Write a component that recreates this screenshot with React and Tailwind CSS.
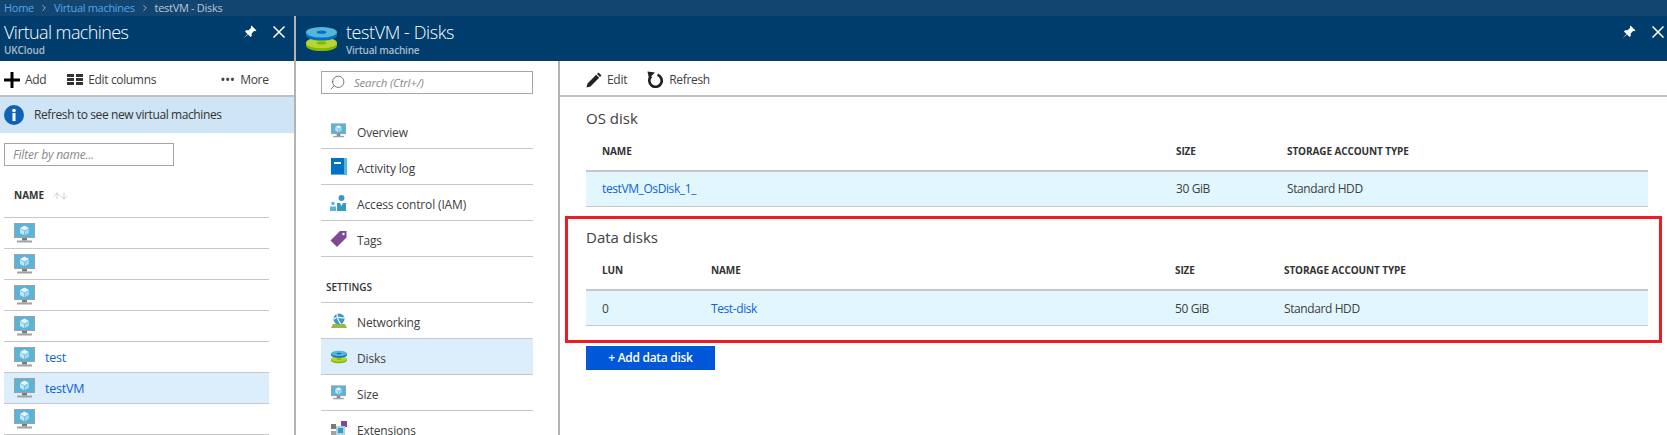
import { Search, ArrowUp, ArrowDown, ChevronRight } from "lucide-react";

const FONT = "font-['Open_Sans','Noto_Sans',sans-serif]";

function VmIcon({ className = "w-[21px] h-[20px]" }) {
  return (
    <svg viewBox="0 0 21 20" className={className}>
      <rect x="0" y="0" width="21" height="15" fill="#a0a1a2" />
      <rect x="1" y="1" width="19" height="13" fill="#59b4d9" />
      <path d="M10.5 2.5 15 5l-4.5 2.5L6 5z" fill="#e8f4fa" />
      <path d="M6 5.5l4.2 2.4v4.4L6 10z" fill="#c2e3f1" />
      <path d="M15 5.5l-4.2 2.4v4.4L15 10z" fill="#a5d5ea" />
      <rect x="8" y="15" width="5" height="2.5" fill="#7a7a7a" />
      <rect x="3" y="17.5" width="15" height="2" fill="#a0a1a2" />
    </svg>
  );
}

function DiskIcon({ className }) {
  return (
    <svg viewBox="0 0 32 26" className={className}>
      <path d="M0 17v3c0 3 7 5.500 16 5.500S32 23 32 20v-3z" fill="#7fba00" />
      <ellipse cx="16" cy="17" rx="16" ry="5.500" fill="#b8d432" />
      <ellipse cx="16" cy="17" rx="5" ry="1.700" fill="#7fba00" />
      <path d="M0 6v3c0 3 7 5.500 16 5.500S32 12 32 9V6z" fill="#0072c6" />
      <ellipse cx="16" cy="6" rx="16" ry="5.500" fill="#59b4d9" />
      <ellipse cx="16" cy="6" rx="5" ry="1.700" fill="#0072c6" />
    </svg>
  );
}

function PinIcon() {
  return (
    <svg viewBox="0 0 14 14" className="h-[14px] w-[14px]" fill="white">
      <path d="M8.500 0.500 13.500 5.500 12.300 6.200 11.300 5.800 8.700 8.400 8.700 11 7.600 12 2 6.400 3 5.300 5.600 5.300 8.200 2.700 7.800 1.700z" />
      <path d="M4.500 9 0.500 13.500 5 9.500z" />
    </svg>
  );
}

function CloseIcon() {
  return (
    <svg viewBox="0 0 12 12" className="h-[12px] w-[12px]" stroke="white" strokeWidth="1.500">
      <path d="M0.500 0.500 11.500 11.500M11.500 0.500 0.500 11.500" />
    </svg>
  );
}

function PanelHeaderActions() {
  return (
    <div className="mb-[14px] flex items-center gap-[16px]">
      <PinIcon />
      <CloseIcon />
    </div>
  );
}

function ActivityIcon() {
  return (
    <svg viewBox="0 0 16 17" className="h-[17px] w-[16px]">
      <rect width="16" height="17" fill="#59b4d9" />
      <rect width="13" height="16" fill="#0072c6" />
      <rect x="3" y="4" width="7" height="2" fill="white" />
    </svg>
  );
}

function AccessIcon() {
  return (
    <svg viewBox="0 0 17 16" className="h-[16px] w-[17px]">
      <circle cx="11.500" cy="3" r="3" fill="#3999c6" />
      <path d="M7 8h9v8H7z" fill="#3999c6" />
      <path d="M10 8l1.500 3L13 8z" fill="white" />
      <circle cx="3" cy="8.500" r="1.700" fill="#59b4d9" />
      <path d="M0 11.500h6V16H0z" fill="#59b4d9" />
    </svg>
  );
}

function TagIcon() {
  return (
    <svg viewBox="0 0 17 17" className="h-[17px] w-[17px]">
      <path d="M10 1h6.500v6.500L7 17 0.500 10.500z" fill="#804998" />
      <circle cx="13.500" cy="4" r="1.200" fill="white" />
    </svg>
  );
}

function NetworkIcon() {
  return (
    <svg viewBox="0 0 16 15" className="h-[15px] w-[16px]">
      <path d="M2 11h12l2 4H0z" fill="#9cb54a" />
      <circle cx="8" cy="6" r="5.500" fill="#3999c6" />
      <path d="M3 6c3-3 6-1 10-1M6 1c0 4 1 7 4 10" stroke="white" strokeWidth="1.200" fill="none" />
    </svg>
  );
}

function ExtensionsIcon() {
  return (
    <svg viewBox="0 0 16 16" className="h-[16px] w-[16px]">
      <rect x="0" y="3" width="5" height="5" fill="#7a7a7a" />
      <rect x="0" y="10" width="5" height="6" fill="#a0a1a2" />
      <rect x="10" y="0" width="6" height="6" fill="#804998" />
      <rect x="5" y="5" width="9" height="9" fill="#a5d5ea" />
      <rect x="7" y="7" width="5" height="5" fill="#3999c6" />
    </svg>
  );
}

function RefreshIcon() {
  return (
    <svg viewBox="0 0 16 17" className="mr-[6px] h-[17px] w-[16px]" fill="none">
      <path d="M10.500 3.800a6.200 6.200 0 1 1-6.300 1.400" stroke="#222" strokeWidth="2.700" />
      <path d="M0.500 0.500 8 1.500 2 7.500z" fill="#222" />
    </svg>
  );
}

const vmRows = ["", "", "", "", "test", "testVM", ""];

const menuTop = [
  { label: "Overview", icon: <VmIcon className="h-[15px] w-[15px]" /> },
  { label: "Activity log", icon: <ActivityIcon /> },
  { label: "Access control (IAM)", icon: <AccessIcon /> },
  { label: "Tags", icon: <TagIcon /> },
];

const menuSettings = [
  { label: "Networking", icon: <NetworkIcon /> },
  { label: "Disks", icon: <DiskIcon className="h-[14px] w-[16px]" />, active: true },
  { label: "Size", icon: <VmIcon className="h-[15px] w-[15px]" /> },
  { label: "Extensions", icon: <ExtensionsIcon /> },
];

function MenuRow({ item }) {
  return (
    <div
      className={`flex h-[36px] items-center gap-[10px] border-b border-[#c8c8c8] pl-[9px] text-[12px] tracking-[-0.15px] text-[#404040] ${
        item.active ? "bg-[#dcedfc]" : ""
      }`}
    >
      <span className="flex w-[17px] justify-center">{item.icon}</span>
      <span className="pt-[4px]">{item.label}</span>
    </div>
  );
}

function TableHead({ cols }) {
  return (
    <div className="flex h-[43px] items-center border-b-2 border-[#c8c8c8] pt-[3px] text-[10px] font-bold tracking-[-0.1px] text-[#333]">
      {cols.map((c) => (
        <div key={c.label} className={`${c.w} pl-[16px]`}>
          {c.label}
        </div>
      ))}
    </div>
  );
}

export default function App() {
  return (
    <div className={`flex h-[435px] w-[1667px] flex-col overflow-hidden bg-white ${FONT}`}>
      {/* Breadcrumb */}
      <div className="flex h-[16px] items-center gap-[5px] bg-[#134571] pl-[4px] text-[11px] tracking-[-0.3px] text-[#b8c8d6]">
        <span className="text-[#4fa6ea]">Home</span>
        <ChevronRight className="h-[10px] w-[10px]" />
        <span className="text-[#4fa6ea]">Virtual machines</span>
        <ChevronRight className="h-[10px] w-[10px]" />
        <span>testVM - Disks</span>
      </div>

      <div className="flex min-h-0 flex-1">
        {/* Virtual machines blade */}
        <div className="flex w-[296px] flex-col border-r-2 border-[#b3b3b3]">
          <div className="flex h-[45px] items-center justify-between bg-[#003c6c] pl-[4px] pr-[9px]">
            <div>
              <div className="text-[18px] font-light leading-[24px] tracking-[-0.6px] text-white">Virtual machines</div>
              <div className="text-[10px] font-semibold leading-[13px] tracking-[-0.1px] text-[#a9bccd]">UKCloud</div>
            </div>
            <PanelHeaderActions />
          </div>

          <div className="flex h-[36px] items-center border-b-2 border-[#c0c0c0] pl-[4px] pt-[3px] text-[12px] tracking-[-0.35px] text-[#404040]">
            <svg viewBox="0 0 16 16" className="mr-[5px] h-[16px] w-[16px] fill-black">
              <path d="M6.500 0h3v6.500H16v3H9.500V16h-3V9.500H0v-3h6.500z" />
            </svg>
            <span className="mr-[21px]">Add</span>
            <svg viewBox="0 0 16 11" className="mr-[5px] h-[11px] w-[16px] fill-[#333]">
              <path d="M0 0h7v3H0zM9 0h7v3H9zM0 4h7v3H0zM9 4h7v3H9zM0 8h7v3H0zM9 8h7v3H9z" />
            </svg>
            <span>Edit columns</span>
            <span className="ml-[65px] mr-[5px] text-[10px] font-bold tracking-[1px]">•••</span>
            <span>More</span>
          </div>

          <div className="flex h-[36px] items-center gap-[10px] bg-[#cfe4f5] pl-[4px] text-[12px] tracking-[-0.4px] text-[#333]">
            <svg viewBox="0 0 20 20" className="h-[20px] w-[20px]">
              <circle cx="10" cy="10" r="10" fill="#0f62b5" />
              <rect x="8.500" y="8" width="3" height="8" fill="white" />
              <circle cx="10" cy="5.500" r="1.800" fill="white" />
            </svg>
            Refresh to see new virtual machines
          </div>

          <div className="px-[4px] pt-[10px]">
            <div className="flex h-[23px] w-[170px] items-center border border-[#a6a6a6] pl-[8px] text-[12px] italic tracking-[-0.2px] text-[#8a8a8a]">
              Filter by name...
            </div>
            <div className="flex h-[52px] w-[265px] items-center border-b border-[#c8c8c8] pl-[10px] pt-[8px] text-[10px] font-bold text-[#333]">
              NAME
              <span className="ml-[8px] flex text-[#c8c8c8]">
                <ArrowUp className="h-[10px] w-[10px]" />
                <ArrowDown className="-ml-[3px] h-[10px] w-[10px]" />
              </span>
            </div>
            <div className="w-[265px]">
              {vmRows.map((name, i) => (
                <div
                  key={i}
                  className={`flex h-[31px] items-center gap-[10px] border-b border-[#c8c8c8] pl-[10px] text-[12.500px] tracking-[-0.2px] text-[#0f62d9] ${
                    name === "testVM" ? "bg-[#dcedfc]" : ""
                  }`}
                >
                  <VmIcon />
                  <span className="pt-[2px]">{name}</span>
                </div>
              ))}
            </div>
          </div>
        </div>

        {/* testVM - Disks blade */}
        <div className="flex min-w-0 flex-1 flex-col">
          <div className="flex h-[45px] items-center justify-between bg-[#003c6c] pl-[10px] pr-[3px]">
            <div className="flex items-center gap-[9px]">
              <DiskIcon className="h-[26px] w-[31px]" />
              <div>
                <div className="text-[18px] font-light leading-[24px] tracking-[-0.4px] text-white">testVM - Disks</div>
                <div className="text-[10px] font-semibold leading-[13px] tracking-[-0.2px] text-[#a9bccd]">Virtual machine</div>
              </div>
            </div>
            <PanelHeaderActions />
          </div>

          <div className="flex min-h-0 flex-1">
            {/* Resource menu */}
            <div className="w-[264px] border-r-2 border-[#b3b3b3] px-[25px] pt-[10px]">
              <div className="flex h-[23px] items-center gap-[8px] border border-[#a6a6a6] pl-[7px] text-[11.500px] italic tracking-[-0.2px] text-[#8a8a8a]">
                <Search className="h-[17px] w-[17px] -scale-x-100 text-[#555]" strokeWidth={1.1} />
                Search (Ctrl+/)
              </div>
              <div className="mt-[19px]">
                {menuTop.map((item) => (
                  <MenuRow key={item.label} item={item} />
                ))}
              </div>
              <div className="flex h-[46px] items-end border-b border-[#c8c8c8] pb-[7px] pl-[5px] text-[10px] font-semibold text-[#333]">
                SETTINGS
              </div>
              {menuSettings.map((item) => (
                <MenuRow key={item.label} item={item} />
              ))}
            </div>

            {/* Content */}
            <div className="min-w-0 flex-1">
              <div className="flex h-[36px] items-center border-b-2 border-[#c0c0c0] pl-[26px] pt-[3px] text-[12px] tracking-[-0.3px] text-[#404040]">
                <svg viewBox="0 0 16 16" className="mr-[5px] h-[16px] w-[16px] fill-[#222]">
                  <path d="M12.500 0.500 15.500 3.500 14 5 11 2zM10.200 2.800 13.200 5.800 4.500 14.500 0.500 15.500 1.500 11.500z" />
                </svg>
                <span className="mr-[20px]">Edit</span>
                <RefreshIcon />
                <span>Refresh</span>
              </div>

              <div className="ml-[26px] mr-[19px]">
                <div className="pt-[10px] text-[15px] leading-[22px] text-[#404040]">OS disk</div>
                <TableHead cols={[{ label: "NAME", w: "w-[574px]" }, { label: "SIZE", w: "w-[111px]" }, { label: "STORAGE ACCOUNT TYPE", w: "" }]} />
                <div className="flex h-[35px] items-center border-b border-[#c8c8c8] bg-[#e2f6fd] text-[12px] tracking-[-0.4px] text-[#404040]">
                  <div className="w-[574px] pl-[16px] text-[#0f62d9]">testVM_OsDisk_1_</div>
                  <div className="w-[111px] pl-[16px]">30 GiB</div>
                  <div className="pl-[16px]">Standard HDD</div>
                </div>
              </div>

              {/* Highlighted data disks section */}
              <div className="ml-[5px] mr-[5px] mt-[9px] h-[127px] border-[3px] border-[#ed1c24] pl-[18px] pr-[11px]">
                <div className="pt-[7px] text-[15px] leading-[22px] text-[#404040]">Data disks</div>
                <TableHead cols={[{ label: "LUN", w: "w-[109px]" }, { label: "NAME", w: "w-[464px]" }, { label: "SIZE", w: "w-[109px]" }, { label: "STORAGE ACCOUNT TYPE", w: "" }]} />
                <div className="flex h-[35px] items-center border-b border-[#c8c8c8] bg-[#e2f6fd] pt-[1px] text-[12px] tracking-[-0.4px] text-[#404040]">
                  <div className="w-[109px] pl-[16px]">0</div>
                  <div className="w-[464px] pl-[16px] text-[#0f62d9]">Test-disk</div>
                  <div className="w-[109px] pl-[16px]">50 GiB</div>
                  <div className="pl-[16px]">Standard HDD</div>
                </div>
              </div>

              <button className="ml-[26px] mt-[3px] h-[24px] w-[129px] bg-[#0058d8] text-[12px] font-semibold tracking-[-0.3px] text-white">
                + Add data disk
              </button>
            </div>
          </div>
        </div>
      </div>
    </div>
  );
}
